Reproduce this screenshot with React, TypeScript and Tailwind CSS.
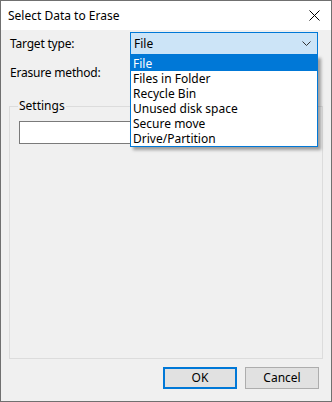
export default function App() {
  const items = [
    "File",
    "Files in Folder",
    "Recycle Bin",
    "Unused disk space",
    "Secure move",
    "Drive/Partition",
  ];

  return (
    <div
      className="flex h-[402px] w-[332px] flex-col border border-[#707070] bg-white text-[12px] text-black"
      style={{ fontFamily: '"Noto Sans", "Segoe UI", sans-serif' }}
    >
      {/* title bar */}
      <div className="flex h-[29px] items-center justify-between bg-white pl-[7px] pr-[11px]">
        <span className="leading-none">Select Data to Erase</span>
        <svg width="11" height="11" viewBox="0 0 11 11">
          <path d="M0.5 0.5 L10.5 10.5 M10.5 0.5 L0.5 10.5" stroke="#000" strokeWidth="1" />
        </svg>
      </div>

      {/* body */}
      <div className="relative flex flex-1 flex-col bg-[#f0f0f0]">
        <div className="mt-[2px] flex h-[23px] items-center">
          <span className="w-[129px] pl-[9px] tracking-[-0.2px]">Target type:</span>
          <div className="flex h-[23px] w-[188px] items-center justify-between border border-[#0078d7] bg-[#cce4f7] pl-[3px] pr-[6px]">
            <span>File</span>
            <svg width="9" height="5" viewBox="0 0 9 5">
              <path d="M0.5 0.5 L4.5 4.5 L8.5 0.5" stroke="#333" strokeWidth="1" fill="none" />
            </svg>
          </div>
        </div>

        <div className="mt-[6px] flex h-[23px] items-center">
          <span className="w-[129px] pl-[9px] tracking-[-0.2px]">Erasure method:</span>
          <div className="h-[23px] w-[188px] border border-[#adadad] bg-[#e1e1e1]" />
        </div>

        <fieldset className="mx-[8px] mt-[14px] h-[261px] border border-[#dcdcdc] px-[9px]">
          <legend className="ml-[-1px] px-[1px] leading-[16px]">Settings</legend>
          <div className="mt-[7px] h-[23px] border border-[#7a7a7a] bg-white" />
        </fieldset>

        <div className="mt-[8px] flex justify-end gap-[8px] pr-[12px]">
          <button className="h-[22px] w-[74px] border-2 border-[#0078d7] bg-[#e1e1e1] leading-none">
            OK
          </button>
          <button className="h-[22px] w-[74px] border border-[#adadad] bg-[#e1e1e1] leading-none">
            Cancel
          </button>
        </div>

        {/* open combo list */}
        <div className="absolute left-[129px] top-[25px] w-[188px] border border-[#0078d7] bg-white shadow-[3px_3px_3px_rgba(0,0,0,0.35)]">
          {items.map((it, i) => (
            <div
              key={it}
              className={
                i === 0
                  ? "h-[15px] bg-[#0078d7] pl-[2px] leading-[15px] text-white"
                  : "h-[15px] pl-[2px] leading-[15px]"
              }
            >
              {it}
            </div>
          ))}
        </div>
      </div>
    </div>
  );
}
